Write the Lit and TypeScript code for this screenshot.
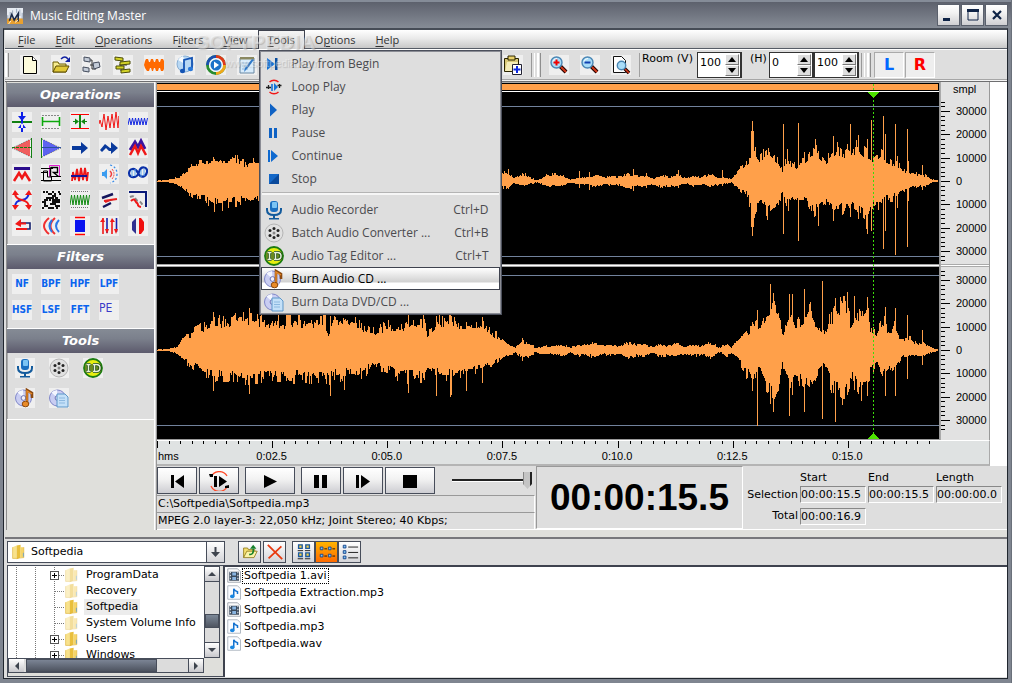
import { LitElement, html, svg, css } from "lit";
import { customElement, property } from "lit/decorators.js";
import { classMap } from "lit/directives/class-map.js";

type Key = [number, number, number];

const stripes = (n: number, step: number, x0: number, y1: number, y2: number) =>
  Array.from({ length: n }, (_, i) => `${x0 + i * step},${i % 2 ? y1 : y2}`).join(" ");

const noisePath = () => {
  let s = 11;
  let d = "";
  for (let y = 1; y < 19; y += 2)
    for (let x = 1; x < 19; x += 2) {
      s = (s * 1103515245 + 12345) & 0x7fffffff;
      if ((s >> 12) % 100 < 50) d += `M${x + ((s >> 5) % 2)} ${y}h2v2h-2z`;
    }
  return d;
};

const disc = svg`<circle cx="8.5" cy="10" r="8" fill="#c9cdf2" stroke="#7f86c8"/><path d="M8.5 10L2.5 4.5A8 8 0 0 1 8 2z" fill="#f4f6ff"/><path d="M8.5 10L15 15A8 8 0 0 1 9 18z" fill="#eef0ff"/><circle cx="8.5" cy="10" r="2.4" fill="#f0f0fa" stroke="#6d74b8"/>`;
const lens = svg`<path d="M11 11l6 6" stroke="#200" stroke-width="4"/><path d="M12 12l5 5" stroke="#d33a1a" stroke-width="2"/><circle cx="7.500" cy="7.500" r="5.500" fill="#a8dcf8" stroke="#4a86b4" stroke-width="1.400"/><path d="M4 7a4 4 0 0 1 4-3.500" stroke="#fff" fill="none"/>`;

const ICONS: Record<string, unknown> = {
  insert: svg`<path d="M0 9h20v2H0z" fill="#118011"/><path d="M9 0h2v20H9zM6 4h8l-4 5zM6 16h8l-4-5z" fill="#0d1fe8"/>`,
  range: svg`<path d="M1 3.500h18M1 16.500h18" stroke="#888" stroke-dasharray="2 1"/><path d="M1.500 5v9M18.500 5v9M2 9.500h16" stroke="#0da80d" stroke-width="1.600"/>`,
  squeeze: svg`<path d="M1 2.500h18M1 16.500h18" stroke="#f00"/><path d="M9 3h2v13H9z" fill="#118a11"/><path d="M3 9.500h5M12 9.500h5" stroke="#118a11"/><path d="M9 9.500l-4-3v6zM11 9.500l4-3v6z" fill="#118a11"/>`,
  redwave: svg`<path d="M0 12l1-4 2 7 2-13 2 16 2-14 2 12 2-14 2 14 2-16 2 16 1-12 1 5" fill="none" stroke="#f01818"/>`,
  bluewave: svg`<polyline points="${stripes(14, 1.5, 0, 6, 13)}" fill="none" stroke="#1428e0"/>`,
  fadein: svg`<path d="M0 10L19 1M0 10l19 9" stroke="#777" stroke-dasharray="1 1" fill="none"/><path d="M3 9v2M5 8v4M7 7v6M9 6v8M11 5v10M13 4v12M15 3v14M17 2v16" stroke="#f01010" stroke-width="1.300"/><path d="M0 9.500h20" stroke="#118011" stroke-dasharray="3 1"/><path d="M19.500 0v20" stroke="#118011"/>`,
  fadeout: svg`<path d="M20 10L1 1M20 10L1 19" stroke="#777" stroke-dasharray="1 1" fill="none"/><path d="M17 9v2M15 8v4M13 7v6M11 6v8M9 5v10M7 4v12M5 3v14M3 2v16" stroke="#1018f0" stroke-width="1.300"/><path d="M0 9.500h20" stroke="#2a50a0"/><path d="M.5 0v20" stroke="#118011"/>`,
  arrow: svg`<path d="M2 8h9V4l7 6-7 6v-4H2z" fill="#0a3a9c"/>`,
  zigarrow: svg`<path d="M1 12l5-6 5 4h1V4l7 6-7 6v-3h-2L7 10l-4 4z" fill="#0a3a9c"/>`,
  twopeaks: svg`<path d="M2 12l5-8 3 5 3-6 4 8" fill="none" stroke="#3c14a0" stroke-width="3"/><path d="M2 17l5-9 3 7 3-7 5 9" fill="none" stroke="#f01818" stroke-width="2.500"/>`,
  cap: svg`<path d="M2 3h16v3H2z" fill="#2a0c8c"/><path d="M2 17l5-8 3 5 3-5 5 8" fill="none" stroke="#f01818" stroke-width="2.500"/>`,
  reverse: svg`<path d="M8.500 1.500h10v11h-10z" fill="none" stroke="#e020d0"/><path d="M0 4.500h12M0 8.500h6M0 16.500h20M10 12.500h10M2.500 7v10h8v-4h-4V7h-4" stroke="#000" fill="none"/><path d="M9.500 3.500h7v5h-4l5 4M9.500 3.500v9" stroke="#000" stroke-width="1.400" fill="none"/>`,
  trim: svg`<path d="M2 17l1-9 2 8 2-11 2 12 2-13 2 12 2-12 2 13 1-9" fill="none" stroke="#f01818" stroke-width="1.800"/><path d="M1 12h16" stroke="#1a1494" stroke-width="2"/>`,
  speaker: svg`<path d="M3 8h2l3-3v10l-3-3H3z" fill="#3a9cf0"/><path d="M11 7q3 3 0 6" stroke="#f04040" fill="none" stroke-width="1.500"/><path d="M13 5q4 5 0 10" stroke="#f04040" fill="none" stroke-dasharray="2 1"/><path d="M11 1q7 2 7 9t-7 9" stroke="#3a8ce8" fill="none" stroke-width="1.300" stroke-dasharray="2 2"/>`,
  phase: svg`<path d="M1 10c0-6 6-7 9-1s8 4 9-1-6-7-8 0-9 6-10 2" fill="none" stroke="#0a30a8" stroke-width="2.200"/><path d="M4 6v7M7 5v7M13 6v7M16 5v7" stroke="#58a8f0"/>`,
  cross: svg`<path d="M3 18c0-6 2-7 7-8s6-3 7-7" stroke="#1428e0" stroke-width="2" fill="none"/><path d="M3 3c0 4 2 6 7 7s7 3 7 8" stroke="#f01818" stroke-width="2" fill="none"/><path d="M0 5l3-5 4 5zM13 5l4-5 3 5zM13 15h7l-3 5zM0 15h7l-4 5z" fill="#f01818"/>`,
  noise: svg`<path d="${noisePath()}" fill="#111"/>`,
  greenwave: svg`<path d="M1 1.500h18M1 17.500h18" stroke="#777" stroke-dasharray="1 1"/><polyline points="${stripes(14, 1.5, 0, 5, 15)}" fill="none" stroke="#128a12"/>`,
  slashes: svg`<path d="M3 8l11-4M4 17l8-4" stroke="#15155c" stroke-width="2.400"/><path d="M6 12l5-2 7-1M5 11l6-1" stroke="#e82020" stroke-width="2.200"/>`,
  corner: svg`<path d="M1 2h17v15" stroke="#0a1a78" stroke-width="2" fill="none"/><path d="M2 7c6-3 4 3 8 4s3 3 6 5" stroke="#888" stroke-width="2" fill="none" stroke-dasharray="4 2"/><path d="M3 11c4-4 4 1 6 2s-1 3 4 4" stroke="#f01818" stroke-width="2" fill="none"/>`,
  back: svg`<path d="M9 7h9v6H8" stroke="#14206c" stroke-width="1.600" fill="none"/><path d="M4 13h11" stroke="#f01818" stroke-width="2"/><path d="M9 3v8L3 8z" fill="#f01818"/><path d="M8 7.500h6" stroke="#f01818" stroke-width="2"/>`,
  echo: svg`<path d="M8 2Q-2 10 8 18M14 2q-9 8 0 16" stroke="#f03030" stroke-width="2" fill="none"/><path d="M11 4q-5 6 0 12M18 4q-6 6 0 12" stroke="#2a78e8" stroke-width="2" fill="none"/>`,
  block: svg`<path d="M5 1.500h10M5 18.500h10" stroke="#f00" stroke-width="1.400"/><path d="M5 4h10v12H5z" fill="#0a14f0"/>`,
  sliders: svg`<path d="M4 2v16M13 5v13" stroke="#f01818" stroke-width="1.600"/><path d="M1 6l3-4 2 4zM11 6l2-4 3 4z" fill="#f01818"/><path d="M8 2v15M17.500 2v14" stroke="#1a20b0" stroke-width="1.600"/><path d="M6 13h4l-2 5zM15 13h4l-2 5z" fill="#f01818"/>`,
  mirror: svg`<path d="M8 2v16l-4-4V6z" fill="#303090"/><path d="M11 2h2l3 4v8l-3 4h-2z" fill="#f01010"/>`,
  mic: svg`<rect x="6" y="1" width="8" height="11" rx="3" fill="#1b6fc0"/><rect x="8" y="2" width="5" height="6" rx="1" fill="#7cc4f4"/><path d="M3 8v2q0 5 7 5t7-5V8" stroke="#125a9c" stroke-width="2" fill="none"/><path d="M9 15h2v3h4v1.500H5V18h4z" fill="#125a9c"/>`,
  reel: svg`<circle cx="10" cy="10" r="9" fill="#e0e0e0" stroke="#b4b4b4"/><g fill="#222"><circle cx="10" cy="5.400" r="1.500"/><circle cx="14" cy="7.600" r="1.500"/><circle cx="14" cy="12.400" r="1.500"/><circle cx="10" cy="14.600" r="1.500"/><circle cx="6" cy="12.400" r="1.500"/><circle cx="6" cy="7.600" r="1.500"/></g><circle cx="10" cy="10" r="1.500" fill="#888"/>`,
  tag: svg`<circle cx="10" cy="10" r="9" fill="#e6ee10" stroke="#1c7c10" stroke-width="1.800"/><path d="M2 6h16v8H2z" fill="#6a8a20"/><path d="M3.500 6.500h4M5.500 6.500v7M3.500 13.500h4M10 6.500h3q4 0 4 3.500t-4 3.500h-3M11.500 6.500v7" stroke="#1c4c10" stroke-width="3" fill="none"/><path d="M3.500 6.500h4M5.500 6.500v7M3.500 13.500h4M10 6.500h3q4 0 4 3.500t-4 3.500h-3M11.500 6.500v7" stroke="#e8f0dc" stroke-width="1.500" fill="none"/>`,
  cdaudio: svg`${disc}<path d="M12 15V2l5 3v5" stroke="#8c4a10" stroke-width="2.600" fill="none"/><path d="M12 14V3l5 3" stroke="#e88a28" stroke-width="1.400" fill="none"/><ellipse cx="10.500" cy="16" rx="3.300" ry="2.800" fill="#e88a28" stroke="#8c4a10"/>`,
  cddata: svg`${disc}<path d="M8 6h8l3 3v10H8z" fill="#c4e0f8" stroke="#5d96c8"/><path d="M10 10h6M10 12.500h6M10 15h6" stroke="#8cb8e0"/>`,
  begin: svg`<path d="M3 4l8 6-8 6z" fill="#1472d8"/><path d="M11 4h2.500v12H11z" fill="#0a4ea0"/>`,
  loop: svg`<path d="M5.500 5a6.500 6.500 0 0 1 9 0M14.500 15a6.500 6.500 0 0 1-9 0" stroke="#f01818" stroke-width="1.400" fill="none"/><path d="M8 7v7" stroke="#1472d8" stroke-width="1.600"/><path d="M10 6l4 4-4 4z" fill="#1472d8"/><path d="M4.500 8v4M2 10.500h5M15.500 7v4M13.500 8.500h4" stroke="#222" stroke-width="1.300"/>`,
  play: svg`<path d="M6 3.500l7 6.500-7 6.500z" fill="#0f62c4"/>`,
  pause: svg`<path d="M5 5h3v10H5zM10 5h3v10h-3z" fill="#0f62c4"/>`,
  cont: svg`<path d="M4 4h2v12H4zM7 4l7 6-7 6z" fill="#0f6ad0"/>`,
  stop: svg`<path d="M5 5h10v10H5z" fill="#0a4a9c"/><path d="M5 5h10L5 15z" fill="#1468c8"/>`,
  newdoc: svg`<path d="M3.500 1.500h9l4 4v13h-13z" fill="#fdfbdc" stroke="#000"/><path d="M12.500 1.500v4h4" fill="#fff" stroke="#000"/>`,
  open: svg`<path d="M2 17V7h5l1 2h7v8z" fill="#f6ec90" stroke="#6b5a00"/><path d="M2 17l3-6h13l-3 6z" fill="#e0c838" stroke="#5a4a00"/><path d="M10 4q4-4 7 0" stroke="#1020a0" fill="none" stroke-width="1.500"/><path d="M19 2v5h-5z" fill="#1020a0"/>`,
  merge: svg`<path d="M6 5h4v9h4M8 10h6" stroke="#333" fill="none"/><path d="M2 2l6 1v4L2 6zM1 12l6 1v4l-6-1zM11 8l6-1 1 5-6 2z" fill="#c4ccd8" stroke="#444c5c"/>`,
  split: svg`<path d="M8 4v12M6 10h8" stroke="#333" fill="none"/><path d="M2 2l8 1v3L2 5zM7 7l10-1v3L7 10zM3 11h8v3H3zM8 15l9-1v3l-9 1z" fill="#d4d428" stroke="#4c4c08"/>`,
  orangewave: svg`<path d="M0 10l1-4 1-2h2l1 3h1l1-3h2l1 3h1l1-3h2l1 3h1l1-3h2l1 2v8l-1 2h-2l-1-3h-1l-1 3h-2l-1-3h-1l-1 3H8l-1-3H6l-1 3H3l-2-3z" fill="#ff6a00"/>`,
  cdnote: svg`<circle cx="10" cy="9" r="8" fill="#b8d8f4" stroke="#88aed4"/><path d="M10 9L3 5a8 8 0 0 1 5-4z" fill="#f8fcff"/><path d="M9 15V5l8-2v10" stroke="#1454b4" stroke-width="1.800" fill="none"/><ellipse cx="7.500" cy="16" rx="2.600" ry="2.200" fill="#1454b4"/><ellipse cx="15.500" cy="14" rx="2.600" ry="2.200" fill="#2a78d8"/>`,
  wmp: svg`<circle cx="10" cy="10" r="8.500" fill="none" stroke="#2a8c30" stroke-width="3"/><path d="M10 1.500A8.500 8.500 0 0 1 18.500 10" stroke="#e03818" stroke-width="3" fill="none"/><path d="M1.500 10A8.500 8.500 0 0 1 10 1.500" stroke="#1a50b0" stroke-width="3" fill="none"/><path d="M18.500 10A8.500 8.500 0 0 1 10 18.500" stroke="#f0a818" stroke-width="3" fill="none"/><circle cx="10" cy="10" r="7" fill="#f4f8fc"/><circle cx="10" cy="10" r="5.500" fill="#1c72c8"/><path d="M8 6.500l5 3.500-5 3.500z" fill="#fff"/>`,
  notepad: svg`<path d="M3 3h14v15H3z" fill="#d8ecfc" stroke="#6888a4"/><path d="M3 2h14v2.500H3z" fill="#8a8860"/><path d="M5 8h9M5 11h8M5 14h6" stroke="#8cb4dc"/><path d="M17 5l-8 10-2 2 1-4 7-9z" fill="#2f78c8"/>`,
  paste: svg`<path d="M1.500 3.500h14v13h-14z" fill="#d8c878" stroke="#2a2400"/><path d="M5 1h7v4H5z" fill="#ead26a" stroke="#2a2400"/><path d="M4 7h11l-2 9H2z" fill="#f4ecb8"/><path d="M9.500 9.500h9v10h-9z" fill="#fff" stroke="#223"/><path d="M14 11v7M10.500 14.500h7" stroke="#0a28e0" stroke-width="2"/>`,
  zoomin: svg`${lens}<path d="M7.500 4.500v6M4.500 7.500h6" stroke="#f00000" stroke-width="2"/>`,
  zoomout: svg`${lens}<path d="M4.500 7.500h6" stroke="#1040b0" stroke-width="2"/>`,
  zoompage: svg`<path d="M2.500 1.500h8l4 4v12h-12z" fill="#fff" stroke="#111"/><path d="M13 13l5 5" stroke="#200" stroke-width="3.500"/><path d="M14 14l4 4" stroke="#d33a1a" stroke-width="1.600"/><circle cx="10.500" cy="10.500" r="4.200" fill="#a8dcf8" stroke="#4a86b4" stroke-width="1.400"/>`,
  tprev: svg`<path d="M4 4h3v13H4zM17 4v13L8 10.500z"/>`,
  tloop: svg`<path d="M2 6a9 9 0 0 1 16-1M18 16a9 9 0 0 1-16-1" fill="none" stroke="#ff4a28" stroke-width="1.300"/><path d="M5 5h3v11H5zM10 5l8 5.500-8 5.500z"/><path d="M0 3h4v3H1zM16 15l4-1v3h-4z"/>`,
  tplay: svg`<path d="M4 4l13 6.500L4 17z"/>`,
  tpause: svg`<path d="M3 4h5v13H3zM11 4h5v13h-5z"/>`,
  tcont: svg`<path d="M3 4h3v13H3zM8 4l9 6.500L8 17z"/>`,
  tstop: svg`<path d="M3 4h14v13H3z"/>`,
  folder: svg`<path d="M2 4l5-2v16H2z" fill="#f8e28c"/><path d="M7 2l5-1v16l-5 2z" fill="#e9bf3c"/><path d="M12 4h4v13h-4z" fill="#f6d568"/><path d="M2 4v14h5l9-1V4" stroke="#d9a828" stroke-width=".7" fill="none"/><path d="M15.500 11v5" stroke="#5a9cd0"/>`,
  fopen: svg`<path d="M2 17V5h5l1 2h8v3" fill="#f6e070" stroke="#8a7414"/><path d="M2 17l4-8h13l-4 8z" fill="#fbf3a8" stroke="#8a7414"/><path d="M9 13q6 1 5-7" stroke="#15802a" stroke-width="2" fill="none"/><path d="M10 6l4-5 4 5z" fill="#15802a"/>`,
  del: svg`<path d="M1 1l18 18M18 3L2 18" stroke="#e83a10" stroke-width="2.200"/>`,
  vtiles: svg`<g fill="#f4cf46" stroke="#1c5aa0" stroke-width="1.500"><path d="M4 2h4v4H4zM12 2h4v4h-4zM4 11h4v4H4zM12 11h4v4h-4z"/></g><path d="M3 8.500h6M11 8.500h6M3 17.500h6M11 17.500h6" stroke="#111"/>`,
  vicons: svg`<g fill="#7fc4f0" stroke="#12408a"><path d="M2.500 4.500h3v3h-3zM11.500 4.500h3v3h-3zM2.500 12.500h3v3h-3zM11.500 12.500h3v3h-3z"/></g><path d="M7 6.500h3M16 6.500h3M7 14.500h3M16 14.500h3" stroke="#111"/>`,
  vlist: svg`<g fill="#7fc4f0" stroke="#12408a"><path d="M2.500 2.500h3v3h-3zM2.500 8.500h3v3h-3zM2.500 14.500h3v3h-3z"/></g><path d="M8 4.500h11M8 10.500h11M8 16.500h11" stroke="#111"/>`,
  film: svg`<path d="M1 1h13l4 4v14H1z" fill="#fafafa" stroke="#8a929c"/><path d="M3 5h13v12H3z" fill="#3a4a5c"/><path d="M7 6h5v4H7zM7 12h5v4H7z" fill="#88b4e0"/><path d="M4.500 5v12M14.500 5v12" stroke="#e4e8ec" stroke-width="1.500" stroke-dasharray="2 2"/>`,
  note: svg`<path d="M1 1h13l4 4v14H1z" fill="#fafcff" stroke="#9aa4b0"/><path d="M9 15V5q1 3 5 4v3" stroke="#1472d0" stroke-width="2" fill="none"/><ellipse cx="7" cy="15" rx="3" ry="2.500" fill="#1a86e0"/>`,
  app: svg`<rect width="20" height="20" fill="#e6ebf2"/><path d="M0 13h20v7H0z" fill="#e8a030"/><path d="M1 9v5M4 5v6M16 2v8M19 6v8M12 1v5M7 3v4" stroke="#8494ac"/><path d="M3 16l3-8 3 7 5-8v10" stroke="#1c2a48" stroke-width="2" fill="none"/><path d="M2 20l3-4M10 18l4-3" stroke="#fff"/>`,
};

const icon = (name: string, size = 20) =>
  svg`<svg width=${size} height=${size} viewBox="0 0 20 20" aria-hidden="true">${ICONS[name]}</svg>`;

const CH1: Key[] = [
  [0, 0.6, 0.6], [8, 1, 1], [16, 3, 3], [22, 5, 6], [28, 13, 12], [40, 24, 20], [55, 26, 26], [75, 25, 26], [100, 22, 22], [200, 26, 26], [325, 24, 22],
  [343, 11, 8], [352, 9, 8], [356, 3, 3], [366, 9, 6], [374, 3, 3], [384, 4, 4], [392, 10, 8], [400, 9, 7], [412, 4, 4], [440, 8, 7], [470, 9, 9], [500, 7, 8], [540, 8, 7], [560, 7, 7], [574, 4, 3], [580, 16, 10], [590, 22, 18],
  [594, 48, 45], [602, 28, 30], [610, 40, 38], [618, 28, 30], [624, 14, 14], [629, 30, 30], [637, 18, 20], [648, 30, 28], [656, 42, 40], [667, 24, 26], [678, 42, 42], [686, 38, 32],
  [700, 42, 38], [709, 30, 46], [714, 24, 28], [722, 32, 28], [730, 24, 22], [738, 24, 18], [744, 13, 12], [755, 10, 7], [761, 8, 6], [767, 7, 6], [774, 2, 2], [781, 0.6, 0.6],
];
const SPIKES1: Key[] = [
  [593, 50, 46], [594, 60, 55], [595, 50, 46], [625, 57, 53], [640, 58, 60], [660, 30, 45], [675, 45, 40], [692, 57, 36], [700, 46, 38], [709, 42, 53], [713, 61, 50],
  [725, 65, 68], [727, 47, 50], [737, 57, 74], [739, 25, 27], [749, 52, 66], [750, 20, 20], [764, 16, 9], [57, 22, 31], [65, 18, 30], [351, 12, 8], [421, 10, 7], [431, 9, 9], [475, 12, 10], [488, 8, 7], [520, 11, 7], [564, 11, 5],
];
const CH2: Key[] = [
  [0, 0.6, 0.6], [9, 1, 1], [20, 4, 4], [25, 15, 12], [35, 22, 19], [45, 28, 27], [58, 36, 31], [75, 32, 30], [82, 40, 36], [110, 34, 32], [140, 36, 33], [168, 36, 36], [171, 22, 34],
  [176, 40, 31], [200, 34, 30], [218, 24, 20], [232, 30, 24], [240, 28, 32], [255, 38, 32], [266, 34, 34], [270, 18, 24], [282, 36, 30], [296, 34, 30], [320, 31, 25], [334, 23, 19], [345, 14, 10], [354, 6, 5],
  [358, 3, 3], [366, 11, 10], [378, 5, 6], [400, 6, 7], [440, 9, 9], [480, 9, 9], [510, 7, 8], [550, 9, 9], [562, 5, 5], [568, 10, 10], [574, 5, 5], [580, 14, 10], [586, 28, 28], [590, 18, 26], [594, 46, 40],
  [601, 24, 26], [607, 48, 48], [616, 54, 62], [621, 48, 46], [624, 16, 16], [632, 46, 50], [638, 28, 36], [645, 42, 44], [653, 48, 48], [660, 30, 28], [666, 20, 18], [673, 42, 44], [687, 54, 50],
  [693, 32, 34], [700, 48, 48], [709, 52, 48], [712, 28, 24], [719, 22, 18], [724, 38, 30], [730, 24, 26], [737, 28, 20], [743, 14, 9], [752, 14, 8], [758, 7, 6], [765, 9, 7], [770, 5, 5], [776, 2, 2], [781, 0.6, 0.6],
];
const SPIKES2: Key[] = [
  [599, 40, 76], [612, 66, 54], [615, 57, 62], [631, 56, 66], [634, 56, 45], [646, 61, 62], [664, 69, 69], [677, 52, 72], [684, 47, 55], [689, 58, 45], [696, 54, 40], [709, 53, 46],
  [727, 43, 46], [737, 42, 46], [749, 35, 29], [764, 20, 15], [56, 38, 41], [92, 42, 44], [173, 34, 46], [187, 30, 40], [251, 38, 43], [279, 34, 46], [293, 36, 47], [294, 34, 45], [309, 28, 41], [325, 33, 33], [365, 12, 11],
];

function wavePath(mid: number, keys: Key[], spikes: Key[], seed: number): string {
  let s = seed;
  const rnd = () => {
    s = (s * 1664525 + 1013904223) >>> 0;
    return s / 4294967296;
  };
  const at = (x: number, side: 1 | 2) => {
    let k = 1;
    while (k < keys.length - 1 && keys[k][0] < x) k++;
    const a = keys[k - 1];
    const b = keys[k];
    return a[side] + ((b[side] - a[side]) * (x - a[0])) / (b[0] - a[0]);
  };
  const level = () => (rnd() < 0.2 ? 0.88 + 0.18 * rnd() : 0.6 + 0.26 * rnd());
  let top = `M0 ${mid}`;
  let bottom = "";
  let fu = 0.7;
  let fd = 0.7;
  for (let x = 0; x < 780; x++) {
    const hit = spikes.find((p) => p[0] === x);
    if (rnd() < 0.75) fu = level();
    if (rnd() < 0.75) fd = level();
    const quiet = x > 376 && x < 574 ? 0.75 + 0.25 * Math.sin(x / 3.7) * Math.sin(x / 9) : 1;
    const up = Math.round(hit ? hit[1] : at(x, 1) * fu * quiet);
    const down = Math.round(hit ? hit[2] : at(x, 2) * fd * quiet);
    top += `V${mid - up}H${x + 1}`;
    bottom = `V${mid + Math.max(1, down)}H${x}` + bottom;
  }
  return `${top}${bottom}Z`;
}

const WAVES = [wavePath(99, CH1, SPIKES1, 77), wavePath(268, CH2, SPIKES2, 4242)];

@customElement("ui-panel")
class UiPanel extends LitElement {
  @property() heading = "";
  static styles = css`
    :host { display: block; border-bottom: 1px solid #fff; }
    h2 {
      margin: 0; height: 24px; text-align: center; color: #fff;
      font: italic bold 13px/24px "DejaVu Sans", sans-serif; background: linear-gradient(#858b95, #7b808c 40%, #5c5a6c);
    }
    .body { display: grid; border-left: 1px solid #aaa; padding: 5px 4px 0; background: #dedede; }
  `;
  render() {
    return html`<h2>${this.heading}</h2><div class="body"><slot></slot></div>`;
  }
}

@customElement("app-root")
export class AppRoot extends LitElement {
  static styles = css`
    :host { display: block; font: 11px/16px "DejaVu Sans", Verdana, sans-serif; color: #000; }
    * { box-sizing: border-box; }
    button, input, select { font: inherit; color: inherit; margin: 0; padding: 0; border-radius: 0; }
    button { border: 0; background: none; display: inline-flex; align-items: center; justify-content: center; }
    svg { display: block; flex: none; }
    ul { list-style: none; margin: 0; padding: 0; }

    .window { display: flex; flex-direction: column; min-height: 100vh; padding: 0 3px 4px; background: #7f8590; border-right: 1px solid #6a707a; }
    .title { display: flex; align-items: center; gap: 7px; height: 28px; padding: 3px 3px 0 7px; margin: 0 -3px; background: linear-gradient(#858c98 2px, #5d616d 2px, #868c96); }
    .title h1 { flex: 1; margin: 0; color: #fff; font: 12px/20px "Open Sans", sans-serif; }
    .sys { display: flex; gap: 1px; padding-bottom: 1px; }
    .sys button { width: 23px; height: 22px; border: 1px solid #5a606c; background: linear-gradient(#fff, #f2f2f2 40%, #cfcfd2); }

    .client { flex: 1; display: flex; flex-direction: column; border: 1px solid #20262e; border-width: 2px 1px 1px; border-top-color: #464c56; background: #dedede; }
    .menubar { display: flex; position: relative; height: 18px; margin-left: 1px; padding-left: 3px; background: linear-gradient(#fff, #e8e8e8 50%, #c8c8c8); font: 11px/18px "Open Sans", sans-serif; color: #333; }
    .menu { position: relative; display: flex; }
    .menu > button { padding: 0 10px; height: 20px; }
    .menu.open { border: 1px solid #3e424e; border-bottom: 0; background: linear-gradient(#f4f4f4, #d4d4d4); height: 19px; }
    .menu.open > button { padding: 0 9px; height: 17px; }
    .menu button u { text-underline-offset: 2px; }
    .drop { position: absolute; z-index: 5; top: 19px; left: 0; width: 243px; border: 1px solid #4c505c; background: #dedede; padding: 1px; box-shadow: inset 0 0 0 1px #8a8c94; font-size: 12px; }
    .drop button { display: grid; grid-template-columns: 28px 1fr auto; align-items: center; justify-items: start; width: 100%; height: 23px; padding: 0 11px 0 3px; color: #4b4b4f; line-height: 20px; }
    .drop .hot { color: #000; border: 1px solid #3e424e; background: linear-gradient(#fff, #d0d0d0 68%, #fff 70%); padding: 0 10px 0 2px; }
    .drop hr { height: 3px; margin: 2px 1px 3px; border: 0; border-top: 1px solid #b4b4b4; border-bottom: 2px solid #f6f6f6; }
    .mark { position: absolute; z-index: 6; left: 190px; top: 2px; color: #ffffff66; text-shadow: 1px 1px 1px #77777755; font: bold 21px/20px "Liberation Sans", sans-serif; pointer-events: none; }
    .mark small { display: block; font: 11px/14px "Liberation Sans", sans-serif; padding: 4px 0 0 30px; }

    .toolbar { display: flex; align-items: center; height: 34px; margin-left: 1px; border-top: 1px solid #565c66; border-bottom: 1px solid #6e6e70; box-shadow: inset 0 1px #fff, inset 0 -1px #f4f4f4, inset 0 -2px #a6a6a6; }
    .grip { width: 4px; height: 24px; border-left: 2px solid #fff; border-right: 1px solid #8e8e8e; }
    .tools { display: flex; gap: 11px; padding-left: 9px; }
    .tools button, ui-panel button { width: 20px; height: 20px; background: #efefef; }
    .tools.files { flex: 0 0 485px; padding-left: 11px; }
    .tools.view { padding: 0 8px 0 8px; }
    .sep { width: 1px; height: 24px; background: #a0a0a0; }
    .sep.wide { width: 4px; margin: 0 2px 0 8px; border-left: 1px solid #999; border-right: 1px solid #fff; background: none; }
    .sep.wide.tight { margin: 0 2px; }
    .toolbar label { align-self: flex-start; padding: 3px 0 0 2px; line-height: 14px; width: 57px; white-space: nowrap; }
    .toolbar label.h { width: 27px; padding-left: 8px; }
    .spin { display: flex; width: 45px; height: 26px; align-items: center; background: #fff; border: 1px solid #333; border-right-width: 2px; }
    .spin input { flex: 1; min-width: 0; width: 0; border: 0; outline: 0; padding: 0 0 4px 2px; background: none; }
    .spin div { display: flex; flex-direction: column; width: 14px; margin-right: 1px; }
    .spin div button { height: 11px; background: #dedede; border: 1px solid; border-color: #fff #777 #777 #fff; }
    .lr { display: flex; gap: 1px; padding-left: 3px; }
    .lr button { width: 30px; height: 26px; border: 1px solid; border-color: #aaa #fff #fff #aaa; background: #eee; font: bold 16px/20px "DejaVu Sans", sans-serif; color: #0068ff; }
    .lr .r { color: #f00; }

    .main { display: flex; margin-left: 2px; border-left: 1px solid #8c8c8c; }
    aside { flex: 0 0 148px; padding-top: 1px; background: #dfdfdb; border-right: 1px solid #fff; margin-right: 1px; }
    .grid { display: grid; gap: 6px 9px; justify-content: start; }
    .ops { grid-template-columns: repeat(5, 20px); padding-bottom: 8px; }
    .fil { grid-template-columns: repeat(4, 20px); padding-bottom: 8px; }
    .tls { grid-template-columns: repeat(3, 20px); gap: 10px 14px; padding: 0 3px 11px; }
    ui-panel .f { font: bold 10px/20px "DejaVu Sans Condensed", "DejaVu Sans", sans-serif; color: #0a64ee; }
    ui-panel .pe { font: 12px/16px "DejaVu Sans Condensed", "DejaVu Sans", sans-serif; color: #3a3ac8; align-items: flex-start; justify-content: flex-start; }

    .work { flex: 1; min-width: 0; border-left: 1px solid #999; }
    .board { display: grid; grid-template-columns: 1fr 50px 17px; background: #fff; }
    .wave { width: 100%; height: 358px; border-right: 1px solid #999; background: #000; }
    .scale { background: #e2e2e2; border-left: 1px solid #aaa; border-right: 1px solid #999; width: 50px; height: 358px; }
    .scale text { font: 11px "Liberation Sans", Arial, sans-serif; }
    .ruler { grid-column: 1 / 3; display: grid; grid-template-columns: 1fr 50px; height: 26px; border-top: 1px solid #fff; border-bottom: 2px solid #b4b4b4; border-right: 1px solid #aaa; background: #dfe2e2; }
    .ruler svg { width: 100%; height: 7px; }
    .times { display: grid; grid-template-columns: 57fr repeat(6, 115fr) 34fr; font: 11px/16px "Liberation Sans", Arial, sans-serif; text-align: center; }
    .times span:first-child { text-align: left; padding-left: 1px; }

    .deck { display: flex; height: 64px; border-bottom: 1px solid #fff; }
    .transport { flex: 0 0 378px; display: flex; flex-direction: column; }
    .keys { display: flex; align-items: center; height: 29px; gap: 2px; }
    .keys button { width: 40px; height: 27px; border: 1px solid #474d5a; background: linear-gradient(#fff, #f2f2f2 45%, #cdcdd2); }
    .keys .big { width: 50px; }
    .keys .gap { margin: 0 4px; }
    .keys input { appearance: none; width: 80px; height: 20px; margin: 0 0 0 15px; background: linear-gradient(#222, #222) 0 8px / 72px 2px no-repeat, linear-gradient(#fff, #fff) 0 10px / 72px 1px no-repeat; }
    .keys input::-webkit-slider-thumb { appearance: none; width: 9px; height: 17px; background: linear-gradient(90deg, #888 1px, #c4c4c4 1px 7px, #222 7px); clip-path: polygon(0 0, 100% 0, 100% 70%, 50% 100%, 0 70%); }
    .file { height: 17px; border-top: 1px solid #999; border-right: 1px solid #fff; line-height: 16px; padding-left: 1px; white-space: nowrap; }
    .clock { flex: 0 0 207px; margin-left: 1px; border: 1px solid; border-color: #999 #fff #fff #999; text-align: center; font: bold 37px/62px "Liberation Sans", Arial, sans-serif; }
    .sel { display: grid; grid-template-columns: 55px repeat(3, 66px); grid-template-rows: 18px 17px 26px; column-gap: 2px; align-content: start; padding-top: 2px; }
    .sel label { align-self: end; }
    .sel .side { text-align: right; align-self: center; }
    .sel input { width: 66px; height: 17px; border: 1px solid; border-color: #888 #fff #fff #888; background: #dedede; }
    .sel .total { align-self: center; }

    .split { height: 9px; margin-left: 1px; background: #dfdfdb; border-bottom: 2px solid #77777b; }
    .explorer { flex: 1; display: grid; grid-template-columns: 216px 1fr; grid-template-rows: 22px 1fr; gap: 2px 0; margin: 2px 0 1px 3px; }
    .combo { display: flex; align-items: center; border: 1px solid #474d5a; background: #fff; padding-left: 3px; height: 22px; width: 218px; }
    .combo select { appearance: none; flex: 1; border: 0; outline: 0; background: none; padding-left: 4px; height: 20px; }
    .combo span { width: 18px; height: 20px; display: grid; place-items: center; border-left: 1px solid #474d5a; background: linear-gradient(#fff, #d4d4d8); }
    .views { display: flex; gap: 2px; padding-left: 15px; }
    .views button { width: 23px; height: 22px; border: 1px solid #474d5a; background: linear-gradient(#fff, #d4d4d8); }
    .views div { display: flex; margin-left: 4px; }
    .views .on { background: linear-gradient(#ffb400, #ff6a00); }
    .tree { display: grid; grid-template-columns: 1fr 16px; grid-template-rows: 92px 15px; border: 1px solid #474d5a; border-right: 0; padding-right: 3px; background: #dfdfdb; align-content: start; }
    .nodes { overflow: hidden; background: #fff; padding-top: 1px; }
    .nodes li { display: flex; align-items: center; height: 16px; white-space: nowrap; }
    .nodes .name { margin-left: 4px; padding: 0 2px; line-height: 16px; }
    .nodes .cur { background: #ececec; }
    .dim { opacity: 0.5; }
    .vbar, .hbar { display: flex; background: #dcdcdc; border: 1px solid #474d5a; }
    .vbar { flex-direction: column; }
    .vbar button { height: 15px; background: linear-gradient(#fff, #c8c8cc); border-bottom: 1px solid #474d5a; }
    .vbar button:last-child { border-top: 1px solid #474d5a; border-bottom: 0; }
    .vbar i { height: 14px; margin-top: 32px; border: 1px solid #474d5a; background: linear-gradient(#7c8898, #4e5460); }
    .grow { flex: 1; }
    .hbar button { width: 15px; background: linear-gradient(#fff, #c8c8cc); }
    .hbar button:last-child { border-left: 1px solid #474d5a; }
    .hbar i { width: 131px; margin-left: 2px; border: 1px solid #474d5a; background: linear-gradient(#7b8494, #4e5460); }
    .list { border: 2px solid #3e424e; border-right: 0; border-bottom: 0; background: #fff; padding-left: 2px; }
    .list li { display: flex; align-items: center; height: 17px; }
    .list span { padding: 0 1px; border: 1px solid transparent; line-height: 14px; }
    .list .focus { border: 1px dotted #000; }
  `;

  private menus = ["&File", "&Edit", "&Operations", "F&ilters", "&View", "&Tools", "O&ptions", "&Help"];

  private label(text: string) {
    const i = text.indexOf("&");
    return html`<span>${text.slice(0, i)}<u>${text[i + 1]}</u>${text.slice(i + 2)}</span>`;
  }

  private dropdown() {
    const item = (ic: string, name: string, key = "", hot = false) =>
      html`<button class=${classMap({ hot })}>${icon(ic)}<span>${name}</span><span>${key}</span></button>`;
    return html`<div class="drop">
      ${item("begin", "Play from Begin")}${item("loop", "Loop Play")}${item("play", "Play")}${item("pause", "Pause")}${item("cont", "Continue")}${item("stop", "Stop")}
      <hr />
      ${item("mic", "Audio Recorder", "Ctrl+D")}${item("reel", "Batch Audio Converter ...", "Ctrl+B")}${item("tag", "Audio Tag Editor ...", "Ctrl+T")}${item("cdaudio", "Burn Audio CD ...", "", true)}${item("cddata", "Burn Data DVD/CD ...")}
    </div>`;
  }

  private spin(id: string, value: string) {
    return html`<div class="spin"><input id=${id} aria-label=${id} .value=${value} />
      <div>
        <button aria-label="Up"><svg width="8" height="5"><path d="M4 0l4 5H0z" /></svg></button>
        <button aria-label="Down"><svg width="8" height="5"><path d="M0 0h8L4 5z" /></svg></button>
      </div></div>`;
  }

  private iconButtons(names: string[]) {
    return names.map((n) => html`<button aria-label=${n}>${icon(n)}</button>`);
  }

  private sidebar() {
    return html`<aside>
      <ui-panel heading="Operations"><div class="grid ops">${this.iconButtons([
        "insert", "range", "squeeze", "redwave", "bluewave", "fadein", "fadeout", "arrow", "zigarrow", "twopeaks", "cap", "reverse", "trim",
        "speaker", "phase", "cross", "noise", "greenwave", "slashes", "corner", "back", "echo", "block", "sliders", "mirror",
      ])}</div></ui-panel>
      <ui-panel heading="Filters"><div class="grid fil">
        ${["NF", "BPF", "HPF", "LPF", "HSF", "LSF", "FFT"].map((t) => html`<button class="f">${t}</button>`)}
        <button class="pe">PE</button></div></ui-panel>
      <ui-panel heading="Tools"><div class="grid tls">${this.iconButtons(["mic", "reel", "tag", "cdaudio", "cddata"])}</div></ui-panel>
    </aside>`;
  }

  private waveform() {
    return html`<svg class="wave" viewBox="0 0 781 358" preserveAspectRatio="none" shape-rendering="crispEdges" role="img" aria-label="Waveform">
      <rect y="0" width="781" height="1" fill="#aaa" /><rect y="2" width="780" height="6" fill="#ffa04a" /><rect y="9" width="781" height="1" fill="#fff" />
      <path d="M0 24h781v1H0zM0 174h781v1H0zM0 193h781v1H0zM0 343h781v1H0z" fill="#71829c" />
      <path d=${WAVES[0]} fill="#ffa04a" /><path d=${WAVES[1]} fill="#ffa04a" />
      <path d="M0 182h781v1H0zM0 184h781v1H0z" fill="#a4a4a4" /><rect y="183" width="781" height="1" fill="#fff" />
      <path d="M715.500 2v6M715.500 10V357" stroke="#3cdc0a" stroke-dasharray="2 2" />
      <path d="M710 10h12l-6 6zM710 357h12l-6-6z" fill="#4ce000" />
      <rect y="357" width="781" height="1" fill="#999" />
    </svg>`;
  }

  private scale() {
    const ch = (mid: number) =>
      Array.from({ length: 35 }, (_, k) => {
        const i = k - 17;
        const y = mid + Math.round((i * 70) / 15);
        return svg`<rect x="0" y=${y} width=${i % 5 ? 4 : 9} height="1"/>${i % 5 ? "" : svg`<text x="15" y=${y + 4}>${Math.abs(i) * 2000}</text>`}`;
      });
    return html`<svg class="scale" shape-rendering="crispEdges"><text x="12" y="11">smpl</text>${ch(99)}${ch(268)}<rect y="182" width="50" height="3" fill="#aaa" /><rect y="183" width="50" height="1" fill="#fff" /></svg>`;
  }

  private ruler() {
    let d = "";
    for (let i = 0; i < 68; i++) d += `M${Math.round(i * 11.5)} 0h1v${i % 10 ? 3 : 7}h-1z`;
    return html`<div class="ruler"><div>
      <svg viewBox="0 0 781 7" preserveAspectRatio="none" shape-rendering="crispEdges"><path d=${d} /></svg>
      <div class="times"><span>hms</span>${["0:02.5", "0:05.0", "0:07.5", "0:10.0", "0:12.5", "0:15.0"].map((t) => html`<span>${t}</span>`)}</div>
    </div></div>`;
  }

  private deck() {
    const key = (n: string, c = "") => html`<button class=${c} aria-label=${n}>${icon(n)}</button>`;
    const box = (id: string, v: string, c = "") => html`<input id=${id} class=${c} readonly .value=${v} aria-label=${id} />`;
    return html`<div class="deck">
      <div class="transport">
        <div class="keys">${key("tprev")}${key("tloop")}${key("tplay", "big gap")}${key("tpause")}${key("tcont")}${key("tstop", "big")}<input type="range" value="100" aria-label="Volume" /></div>
        <div class="file">C:\\Softpedia\\Softpedia.mp3</div>
        <div class="file">MPEG 2.0 layer-3: 22,050 kHz; Joint Stereo; 40 Kbps;</div>
      </div>
      <output class="clock">00:00:15.5</output>
      <div class="sel">
        <span></span><label for="start">Start</label><label for="end">End</label><label for="length">Length</label>
        <span class="side">Selection</span>${box("start", "00:00:15.5")}${box("end", "00:00:15.5")}${box("length", "00:00:00.0")}
        <label class="side" for="total">Total</label>${box("total", "00:00:16.9", "total")}
      </div>
    </div>`;
  }

  private node(name: string, plus: boolean, dim: boolean, cur = false) {
    return html`<li>
      <svg width="56" height="16"><path d="M8.500 0v16M27.500 0v16M46.500 0v16M47 8.500h9" stroke="#777" stroke-dasharray="1 1" />
        ${plus ? svg`<rect x="42.500" y="4.500" width="8" height="8" fill="#fff" stroke="#555"/><path d="M44 8.500h5M46.500 6v5" stroke="#000"/>` : ""}</svg>
      <span class=${classMap({ dim })}>${icon("folder", 16)}</span><span class=${classMap({ name: true, cur })}>${name}</span></li>`;
  }

  private explorer() {
    const arrow = (d: string) => html`<svg width="8" height="8"><path d=${d} fill="#3e444e" /></svg>`;
    const files = ["Softpedia 1.avi", "Softpedia Extraction.mp3", "Softpedia.avi", "Softpedia.mp3", "Softpedia.wav"];
    return html`<div class="explorer">
      <div class="combo">${icon("folder", 16)}<select aria-label="Folder"><option>Softpedia</option></select>
        <span><svg width="9" height="10"><path d="M3.500 0h2v5H9L4.500 10 0 5h3.500z" fill="#3e444e" /></svg></span></div>
      <div class="views">
        <button aria-label="Up one level">${icon("fopen", 16)}</button><button aria-label="Delete">${icon("del", 16)}</button>
        <div><button aria-label="Tiles">${icon("vtiles", 18)}</button><button class="on" aria-label="Icons">${icon("vicons", 18)}</button><button aria-label="List">${icon("vlist", 18)}</button></div>
      </div>
      <div class="tree">
        <ul class="nodes">${this.node("ProgramData", true, true)}${this.node("Recovery", false, true)}${this.node("Softpedia", false, false, true)}${this.node("System Volume Info", false, true)}${this.node("Users", true, false)}${this.node("Windows", true, false)}</ul>
        <div class="vbar"><button aria-label="Scroll up">${arrow("M0 6l4-4 4 4z")}</button><i></i><span class="grow"></span><button aria-label="Scroll down">${arrow("M0 2h8L4 6z")}</button></div>
        <div class="hbar"><button aria-label="Scroll left">${arrow("M6 0v8L2 4z")}</button><i></i><span class="grow"></span><button aria-label="Scroll right">${arrow("M2 0l4 4-4 4z")}</button></div>
      </div>
      <ul class="list">${files.map((f, i) => html`<li>${icon(f.endsWith("avi") ? "film" : "note", 15)}<span class=${classMap({ focus: i === 0 })}>${f}</span></li>`)}</ul>
    </div>`;
  }

  render() {
    return html`<div class="window">
      <header class="title">${icon("app", 16)}<h1>Music Editing Master</h1>
        <div class="sys">
          <button aria-label="Minimize"><svg width="14" height="14"><path d="M1 10h7v3H1z" fill="#0e2346" /></svg></button>
          <button aria-label="Maximize"><svg width="14" height="14"><path d="M2 2h10v10H2z" fill="none" stroke="#0e2346" /><path d="M1 1h12v3H1z" fill="#0e2346" /></svg></button>
          <button aria-label="Close"><svg width="14" height="14"><path d="M3 3l8 8M11 3l-8 8" stroke="#0e2346" stroke-width="2.200" /></svg></button>
        </div></header>
      <div class="client">
        <nav class="menubar">
          ${this.menus.map((m) => html`<div class=${classMap({ menu: true, open: m === "&Tools" })}><button>${this.label(m)}</button>${m === "&Tools" ? this.dropdown() : ""}</div>`)}
          <div class="mark">SOFTPEDIA<small>www.softpedia.com</small></div>
        </nav>
        <div class="toolbar">
          <span class="grip"></span>
          <div class="tools files">${this.iconButtons(["newdoc", "open", "merge", "split", "orangewave", "cdnote", "wmp", "notepad"])}</div>
          <div class="tools">${this.iconButtons(["paste"])}</div><span class="sep wide"></span><span class="grip"></span>
          <div class="tools view">${this.iconButtons(["zoomin", "zoomout", "zoompage"])}</div>
          <span class="sep"></span>
          <label for="vertical">Room (V)</label>${this.spin("vertical", "100")}
          <label class="h" for="from">(H)</label>${this.spin("from", "0")}${this.spin("to", "100")}
          <span class="sep wide tight"></span><span class="grip"></span>
          <div class="lr"><button>L</button><button class="r">R</button></div>
        </div>
        <div class="main">${this.sidebar()}
          <div class="work"><div class="board">${this.waveform()}${this.scale()}<span></span>${this.ruler()}</div>${this.deck()}</div>
        </div>
        <div class="split"></div>
        ${this.explorer()}
      </div>
    </div>`;
  }
}
